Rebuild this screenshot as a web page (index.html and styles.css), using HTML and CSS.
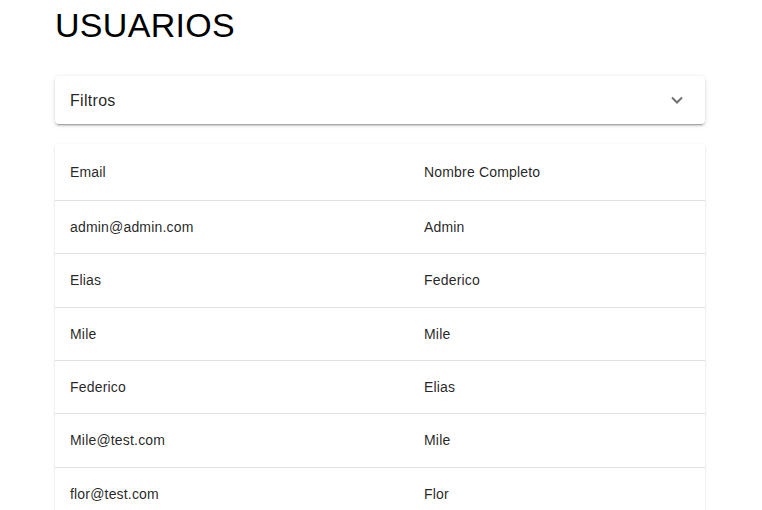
FILE: index.html
```html
<!DOCTYPE html>
<html lang="es">
<head>
<meta charset="utf-8">
<title>Usuarios</title>
<link rel="stylesheet" href="styles.css">
</head>
<body>
<main class="page">
  <h1 class="title">USUARIOS</h1>
  <section class="panel">
    <div class="panel-header">
      <span class="panel-title">Filtros</span>
      <svg class="chevron" width="12" height="8" viewBox="0 0 12 8"><polyline points="1,1.5 6,6.5 11,1.5" fill="none" stroke="#6f6f6f" stroke-width="2"/></svg>
    </div>
  </section>
  <section class="table">
    <div class="row head"><div class="cell">Email</div><div class="cell">Nombre Completo</div></div>
    <div class="row"><div class="cell">admin@admin.com</div><div class="cell">Admin</div></div>
    <div class="row"><div class="cell">Elias</div><div class="cell">Federico</div></div>
    <div class="row"><div class="cell">Mile</div><div class="cell">Mile</div></div>
    <div class="row"><div class="cell">Federico</div><div class="cell">Elias</div></div>
    <div class="row"><div class="cell">Mile@test.com</div><div class="cell">Mile</div></div>
    <div class="row"><div class="cell">flor@test.com</div><div class="cell">Flor</div></div>
  </section>
</main>
</body>
</html>
```
FILE: styles.css
```css
html, body {
  margin: 0;
  padding: 0;
  background: #fff;
  overflow: hidden;
}
body {
  font-family: "Liberation Sans", Arial, sans-serif;
  color: rgba(0,0,0,0.87);
}
.page {
  width: 650px;
  margin: 0 0 0 55px;
}
.title {
  margin: 0;
  font-size: 34px;
  line-height: 51px;
  font-weight: 400;
  color: #000;
  letter-spacing: 0.3px;
}
.panel {
  margin-top: 25px;
  background: #fff;
  border-radius: 4px;
  box-shadow: 0 3px 1px -2px rgba(0,0,0,.2), 0 2px 2px 0 rgba(0,0,0,.14), 0 1px 5px 0 rgba(0,0,0,.12);
}
.panel-header {
  height: 48px;
  box-sizing: border-box;
  padding: 2px 22px 0 15px;
  display: flex;
  align-items: center;
  justify-content: space-between;
}
.panel-title {
  font-size: 16px;
  letter-spacing: 0.3px;
  color: rgba(0,0,0,0.87);
}
.chevron {
  display: block;
  margin-top: -2px;
}
.table {
  margin-top: 20px;
  background: #fff;
  border-radius: 4px;
  box-shadow: 0 2px 1px -1px rgba(0,0,0,.2), 0 1px 1px 0 rgba(0,0,0,.14), 0 1px 3px 0 rgba(0,0,0,.12);
}
.row {
  display: grid;
  grid-template-columns: 354px 1fr;
  height: 53.33px;
  box-sizing: border-box;
  border-bottom: 1px solid #e0e0e0;
  align-items: center;
  font-size: 14px;
  letter-spacing: 0.18px;
}
.row.head {
  height: 57px;
}
.cell {
  padding-left: 15px;
}
```
